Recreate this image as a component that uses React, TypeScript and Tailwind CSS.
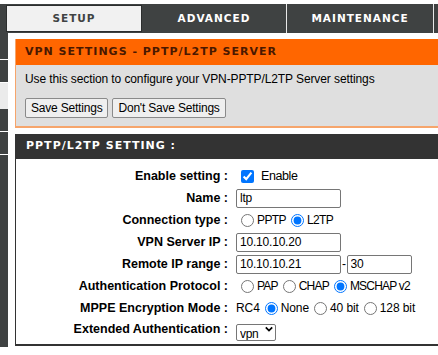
import { useState } from 'react';

const labelCls = 'text-right pr-[8px] font-bold text-[12.5px] text-black whitespace-nowrap';
const inputCls =
  'h-[19px] border border-[#767676] rounded-[2px] bg-white px-[3px] text-[12px] tracking-[-0.2px] text-black outline-none';

const Row = ({ label, tight, children }: { label: string; tight?: string; children: React.ReactNode }) => (
  <div className="flex items-center h-[22px]">
    <div className={`w-[220px] ${labelCls}`}>{label} :</div>
    <div className={`flex items-center text-[12px] text-black whitespace-nowrap ${tight ?? 'tracking-[-0.4px]'}`}>
      {children}
    </div>
  </div>
);

const Radio = ({ checked, name }: { checked?: boolean; name: string }) => (
  <input type="radio" name={name} defaultChecked={checked} className="w-[13px] h-[13px] ml-[5px] mr-[3px]" />
);

const btnCls =
  'h-[20px] px-[5px] bg-[#efefef] border border-[#8a8a8a] rounded-[2px] text-[12px] tracking-[-0.2px] text-black';

const App = () => {
  const [enabled, setEnabled] = useState(true);

  return (
    <div className="w-[438px] h-[355px] overflow-hidden bg-white font-['Liberation_Sans',Arial,sans-serif]">
      {/* top tabs */}
      <div className="pt-[4px]">
        <div className="h-[29px] bg-[#3f4242] flex font-['DejaVu_Sans',sans-serif] font-bold text-[10.5px] tracking-[1px]">
          <div className="w-[6px]" />
          <div className="w-[136px] my-[1px] bg-[#f1f1f1] border border-[#2c2e2e] flex items-center justify-center text-[#404343]">
            SETUP
          </div>
          <div className="w-[144px] flex items-center justify-center text-white">ADVANCED</div>
          <div className="w-px bg-[#e8e8e8]" />
          <div className="w-[146px] flex items-center justify-center text-white">MAINTENANCE</div>
          <div className="w-px bg-[#e8e8e8]" />
          <div className="flex-1" />
        </div>
      </div>

      <div className="flex">
        {/* left nav */}
        <div className="w-[8px] h-[314px] flex flex-col bg-[#3f4242]">
          <div className="h-[26px]" />
          <div className="h-px bg-white" />
          <div className="h-[22px]" />
          <div className="h-px bg-white" />
          <div className="h-[26px] bg-[#ebebeb]" />
          <div className="h-[22px]" />
          <div className="h-px bg-white" />
          <div className="h-[22px]" />
          <div className="h-px bg-white" />
        </div>

        <div className="flex-1 ml-[7px] pt-[6px] flex flex-col">
          {/* orange intro box */}
          <div className="h-[89px] border-l border-b-2 border-[#f6a56c] bg-[#dfdfdf] flex flex-col">
            <div className="h-[26px] bg-[#ff6600] flex items-center pl-[9px] font-['DejaVu_Sans',sans-serif] font-bold text-[11px] tracking-[1px] text-[#4a1800]">
              VPN SETTINGS - PPTP/L2TP SERVER
            </div>
            <div className="pl-[9px] pt-[5px] text-[12px] tracking-[-0.1px] text-black">
              Use this section to configure your VPN-PPTP/L2TP Server settings
            </div>
            <div className="flex gap-[4px] pl-[9px] mt-[10px]">
              <button className={btnCls}>Save Settings</button>
              <button className={btnCls}>Don't Save Settings</button>
            </div>
          </div>

          {/* setting box */}
          <div className="mt-[6px] h-[212px] border-l border-b-2 border-[#333333] flex flex-col">
            <div className="h-[25px] bg-[#333333] flex items-center pl-[10px] font-['DejaVu_Sans',sans-serif] font-bold text-[11px] tracking-[1px] text-white">
              PPTP/L2TP SETTING :
            </div>
            <div className="pt-[6px] flex flex-col">
              <Row label="Enable setting">
                <input
                  type="checkbox"
                  checked={enabled}
                  onChange={() => setEnabled(!enabled)}
                  className="w-[13px] h-[13px] ml-[5px] mr-[7px]"
                />
                <span className="text-[12.5px]">Enable</span>
              </Row>
              <Row label="Name">
                <input className={`${inputCls} w-[105px]`} defaultValue="ltp" />
              </Row>
              <Row label="Connection type" tight="tracking-[-0.6px]">
                <Radio name="ct" />
                PPTP
                <Radio name="ct" checked />
                L2TP
              </Row>
              <Row label="VPN Server IP">
                <input className={`${inputCls} w-[105px]`} defaultValue="10.10.10.20" />
              </Row>
              <Row label="Remote IP range">
                <input className={`${inputCls} w-[105px]`} defaultValue="10.10.10.21" />
                <span className="px-[1px]">-</span>
                <input className={`${inputCls} w-[65px]`} defaultValue="30" />
              </Row>
              <Row label="Authentication Protocol" tight="tracking-[-0.8px]">
                <Radio name="ap" />
                PAP
                <Radio name="ap" />
                CHAP
                <Radio name="ap" checked />
                MSCHAP v2
              </Row>
              <Row label="MPPE Encryption Mode" tight="tracking-[-0.1px]">
                RC4
                <Radio name="mp" checked />
                None
                <Radio name="mp" />
                40 bit
                <Radio name="mp" />
                128 bit
              </Row>
              <div className="flex items-center h-[20px]">
                <div className={`w-[220px] ${labelCls}`}>Extended Authentication :</div>
                <div className="relative w-[40px] h-[17px]">
                  <select
                    defaultValue="vpn"
                    className="appearance-none w-full h-full border border-[#767676] rounded-[2px] bg-white text-[12px] tracking-[-0.3px] text-black pl-[3px] pr-[14px] outline-none"
                  >
                    <option value="vpn">vpn</option>
                  </select>
                  <svg
                    viewBox="0 0 10 10"
                    className="absolute right-[3px] top-[4px] w-[8px] h-[8px] pointer-events-none"
                  >
                    <path d="M1 3 L5 7 L9 3" fill="none" stroke="#000" strokeWidth="2.2" />
                  </svg>
                </div>
              </div>
            </div>
          </div>
        </div>
      </div>
    </div>
  );
};

export default App;
